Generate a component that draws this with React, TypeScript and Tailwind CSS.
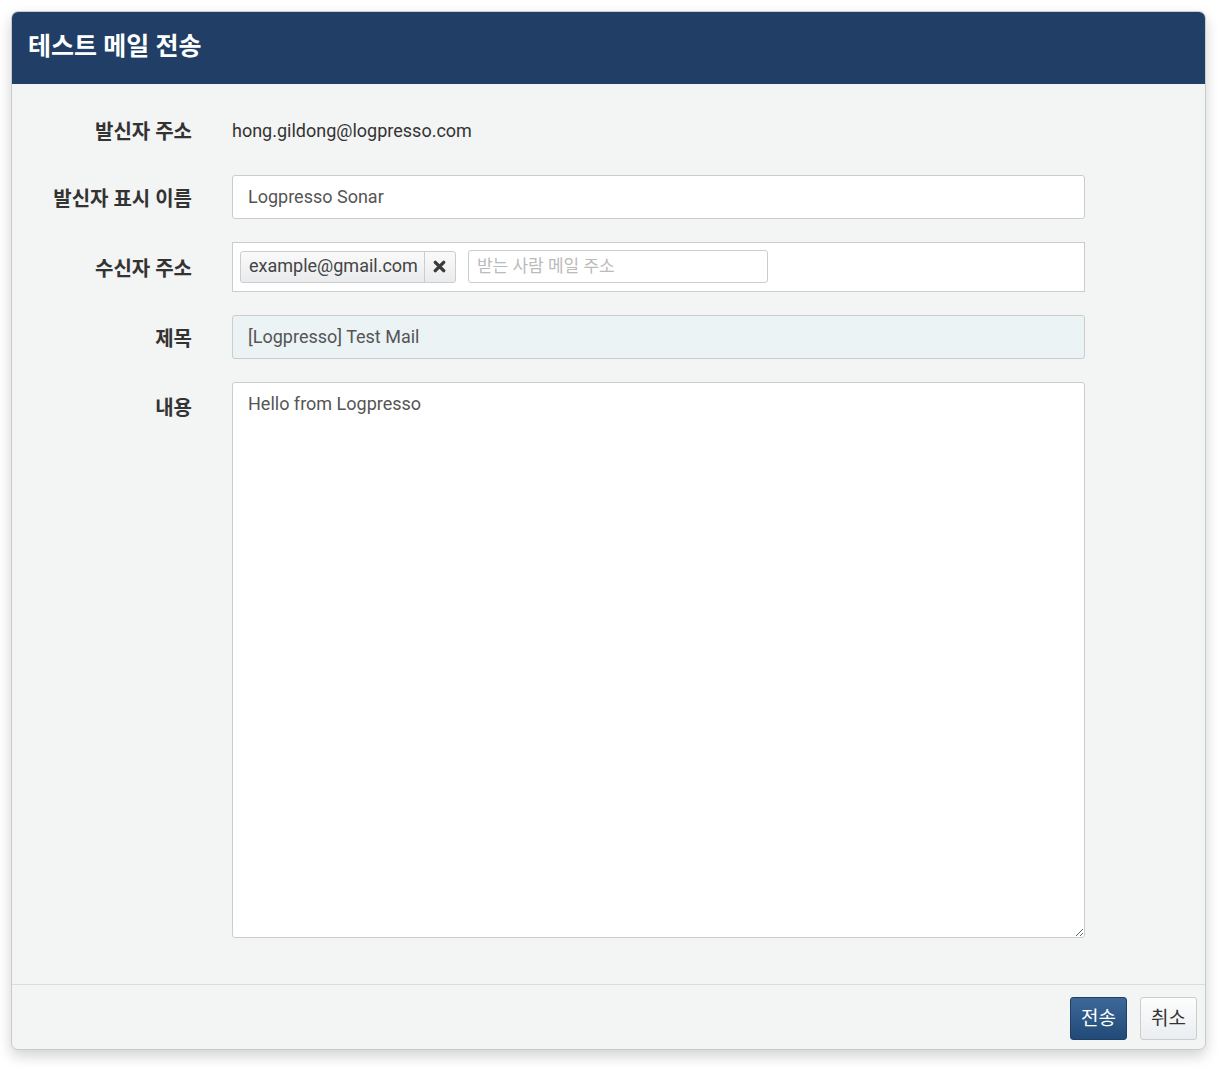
import React from "react";

const font = { fontFamily: 'Roboto, "Noto Sans CJK KR", sans-serif' };

function Label({ children, top = false }: { children: React.ReactNode; top?: boolean }) {
  return (
    <div
      className={`w-[180px] shrink-0 text-right font-bold text-[20px] leading-[28px] text-[#333] ${top ? "pt-[12px]" : "pt-[4px]"}`}
    >
      {children}
    </div>
  );
}

export default function App() {
  return (
    <div className="bg-white w-[1228px] h-[1073px] pt-[11px] pl-[11px]" style={font}>
      <div className="w-[1195px] h-[1039px] rounded-[7px] border border-[#c9cccf] bg-[#f3f4f4] shadow-[0_6px_14px_rgba(0,0,0,0.18)] flex flex-col overflow-hidden">
        <div className="h-[72px] bg-[#213f66] flex items-center pl-[16px] shrink-0">
          <h1 className="text-white text-[25px] leading-[34px] font-bold mt-[-2px]">테스트 메일 전송</h1>
        </div>
        <div className="flex-1 flex flex-col gap-[23px] pt-[24px] pb-[46px]">
          <div className="flex items-center gap-[40px] h-[44px]">
            <Label>발신자 주소</Label>
            <div className="text-[18px] text-[#333] pt-[1px]">hong.gildong@logpresso.com</div>
          </div>
          <div className="flex items-center gap-[40px]">
            <Label>발신자 표시 이름</Label>
            <input
              className="w-[853px] h-[44px] border border-[#ccc] rounded-[3px] bg-white px-[15px] pb-[2px] text-[18px] text-[#555] outline-none"
              style={font}
              defaultValue="Logpresso Sonar"
            />
          </div>
          <div className="flex items-center gap-[40px]">
            <Label>수신자 주소</Label>
            <div className="w-[853px] h-[50px] border border-[#ccc] bg-white flex items-center pl-[7px] pb-[1px] gap-[12px]">
              <div className="flex h-[32px] border border-[#ccc] rounded-[3px] bg-gradient-to-b from-[#fafafa] to-[#e9ebed] text-[18px] text-[#444]">
                <span className="pl-[8px] pr-[6px] flex items-center pb-[2px]">example@gmail.com</span>
                <span className="w-[31px] border-l border-[#ccc] flex items-center justify-center">
                  <svg width="13" height="13" viewBox="0 0 14 14">
                    <path d="M2.5 2.5 L11.5 11.5 M11.5 2.5 L2.5 11.5" stroke="#3a3a3a" strokeWidth="3.6" strokeLinecap="round" />
                  </svg>
                </span>
              </div>
              <input
                className="w-[300px] h-[33px] border border-[#ccc] rounded-[3px] bg-white px-[8px] pb-[2px] text-[17px] text-[#555] placeholder:text-[#bbb] outline-none"
                style={font}
                placeholder="받는 사람 메일 주소"
              />
            </div>
          </div>
          <div className="flex items-center gap-[40px]">
            <Label>제목</Label>
            <input
              className="w-[853px] h-[44px] border border-[#ccc] rounded-[3px] bg-[#ebf3f5] px-[15px] pb-[2px] text-[18px] text-[#555] outline-none"
              style={font}
              defaultValue="[Logpresso] Test Mail"
            />
          </div>
          <div className="flex items-start gap-[40px]">
            <Label top>내용</Label>
            <textarea
              className="w-[853px] h-[556px] border border-[#ccc] rounded-[3px] bg-white px-[15px] py-[7px] text-[18px] text-[#555] outline-none"
              style={font}
              defaultValue="Hello from Logpresso"
            />
          </div>
        </div>
        <div className="h-[65px] border-t border-[#dadcdd] flex items-start justify-end pt-[12px] pr-[8px] gap-[13px] shrink-0">
          <button className="w-[57px] h-[43px] rounded-[3px] border border-[#1f3f66] bg-gradient-to-b from-[#3c6898] to-[#224a78] text-white text-[19px] leading-[24px]" style={font}>
            전송
          </button>
          <button className="w-[57px] h-[43px] rounded-[3px] border border-[#ccc] bg-gradient-to-b from-[#fdfdfd] to-[#eaedf0] text-[#333] text-[19px] leading-[24px]" style={font}>
            취소
          </button>
        </div>
      </div>
    </div>
  );
}
